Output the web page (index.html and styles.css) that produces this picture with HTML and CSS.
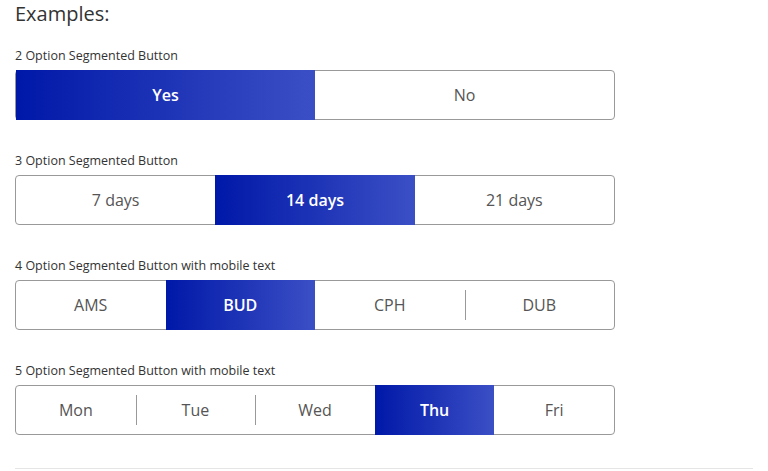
FILE: index.html
```html
<!DOCTYPE html>
<html>
<head>
<meta charset="utf-8">
<link rel="stylesheet" href="styles.css">
</head>
<body>
<div class="page">
  <h3 class="title">Examples:</h3>

  <div class="example">
    <div class="label">2 Option Segmented Button</div>
    <div class="segmented">
      <div class="seg active">Yes</div>
      <div class="seg">No</div>
    </div>
  </div>

  <div class="example">
    <div class="label">3 Option Segmented Button</div>
    <div class="segmented">
      <div class="seg">7 days</div>
      <div class="seg active">14 days</div>
      <div class="seg">21 days</div>
    </div>
  </div>

  <div class="example">
    <div class="label">4 Option Segmented Button with mobile text</div>
    <div class="segmented">
      <div class="seg">AMS</div>
      <div class="seg active">BUD</div>
      <div class="seg">CPH</div>
      <div class="seg">DUB</div>
    </div>
  </div>

  <div class="example">
    <div class="label">5 Option Segmented Button with mobile text</div>
    <div class="segmented">
      <div class="seg">Mon</div>
      <div class="seg">Tue</div>
      <div class="seg">Wed</div>
      <div class="seg active">Thu</div>
      <div class="seg">Fri</div>
    </div>
  </div>

  <hr class="rule">
</div>
</body>
</html>
```
FILE: styles.css
```css
html, body {
  margin: 0;
  padding: 0;
  background: #fff;
}

body {
  font-family: "Open Sans", "Liberation Sans", sans-serif;
  color: #333;
}

.page {
  padding: 2px 15px 0 15px;
  width: 738px;
}

.title {
  margin: 0 0 22px 0;
  font-size: 20px;
  line-height: 24px;
  font-weight: 400;
  color: #333;
}

.example {
  margin-bottom: 33px;
}

.label {
  font-size: 12.5px;
  line-height: 16px;
  color: #333;
  margin-bottom: 6px;
}

.segmented {
  display: flex;
  width: 598px;
  height: 48px;
  border: 1px solid #999;
  border-radius: 4px;
}

.seg {
  position: relative;
  flex: 1 1 0;
  display: flex;
  align-items: center;
  justify-content: center;
  font-size: 16px;
  color: #555;
}

.seg.active {
  margin: -1px 0;
  background: linear-gradient(to right, #0018a8, #3b4fc5);
  color: #fff;
  font-weight: 600;
}

.seg:not(.active) + .seg:not(.active)::before {
  content: "";
  position: absolute;
  left: 0;
  top: 9px;
  bottom: 9px;
  border-left: 1px solid #999;
}

.rule {
  margin: 1px 0 0 0;
  border: 0;
  border-top: 1px solid #e5e5e5;
  height: 0;
}
```
